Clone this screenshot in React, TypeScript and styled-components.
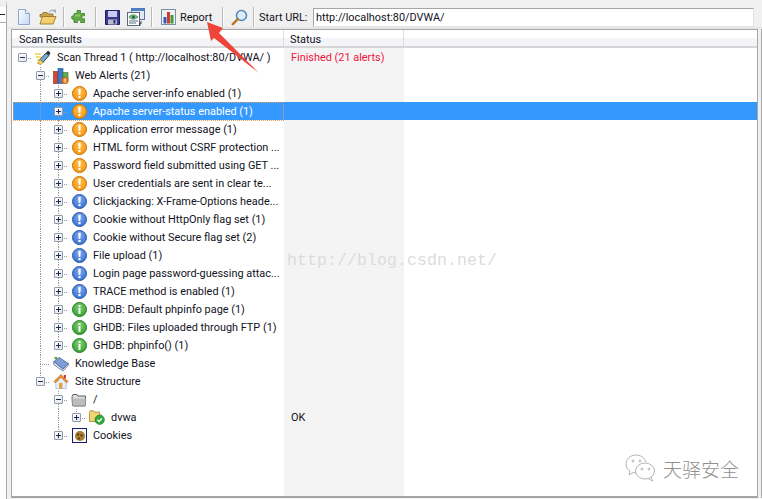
import React from "react";
import styled, { createGlobalStyle, css } from "styled-components";

const Global = createGlobalStyle`
  html, body { margin: 0; padding: 0; background: #f0f0f0; }
  * { box-sizing: border-box; }
`;

const FONT = `Roboto, "Noto Sans", sans-serif`;

const Page = styled.div`
  position: relative;
  width: 762px;
  height: 499px;
  overflow: hidden;
  display: flex;
  background: #f0f0f0;
  font-family: ${FONT};
  font-size: 10.9px;
  color: #11121c;
`;

const LeftStrip = styled.div`
  width: 7px;
  flex: none;
  background: #fff;
  border-right: 1px solid #a9a9a9;
  border-top: 7px solid #f0f0f0;
  display: flex;
  flex-direction: column;
`;

const StripHead = styled.div`
  height: 16px;
  border-bottom: 1px solid #a9a9a9;
  display: flex;
  align-items: flex-start;
  padding-top: 7px;
`;

const StripDash = styled.div`
  width: 5px;
  height: 1px;
  background: #222;
`;

const MainCol = styled.div`
  flex: 1;
  min-width: 0;
  display: flex;
  flex-direction: column;
`;

const Toolbar = styled.div`
  height: 29px;
  flex: none;
  display: flex;
  align-items: center;
  padding: 7px 0 0 5px;
  background: #f0f0f0;
  border-bottom: 2px solid #e6e6e6;
`;

const ToolButton = styled.div`
  width: 24px;
  height: 20px;
  flex: none;
  display: flex;
  align-items: center;
  justify-content: center;
`;

const ReportButton = styled.div`
  width: 60px;
  margin-left: 5px;
  flex: none;
  display: flex;
  align-items: center;
  gap: 3px;
`;

const ToolSep = styled.div<{ $l: number; $r: number }>`
  width: 2px;
  height: 20px;
  flex: none;
  margin: 0 ${(p) => p.$r}px 0 ${(p) => p.$l}px;
  background: linear-gradient(to right, #b9b9b9 1px, #fbfbfb 1px);
`;

const UrlLabel = styled.span`
  margin-left: 4px;
  width: 54px;
  flex: none;
  white-space: nowrap;
`;

const UrlInput = styled.div`
  width: 441px;
  height: 19px;
  flex: none;
  background: #fff;
  border: 1px solid #e4e4e4;
  border-top-color: #a6a6a6;
  border-left-color: #a6a6a6;
  padding-left: 2px;
  line-height: 17px;
  white-space: nowrap;
`;

const Content = styled.div`
  flex: 1;
  min-height: 0;
  display: flex;
  padding: 0 0 1px 4px;
`;

const Panel = styled.div`
  width: 747px;
  flex: none;
  background: #fff;
  border: 1px solid #a6a6a6;
  border-bottom-width: 2px;
  display: flex;
  flex-direction: column;
`;

const RightEdge = styled.div`
  width: 1px;
  margin-left: 3px;
  flex: none;
  background: #a9a9a9;
`;

const Header = styled.div`
  height: 18px;
  flex: none;
  display: grid;
  grid-template-columns: 272px 120px 1fr;
  background: linear-gradient(to bottom, #fff 0, #fff 8px, #f3f4f7 8px, #f3f4f7 16px, #d6d6d6 16px);
`;

const HeaderCell = styled.div<{ $pad: number }>`
  padding-left: ${(p) => p.$pad}px;
  height: 16px;
  line-height: 20px;
  border-right: 1px solid #dedede;
  &:last-child { border-right: 0; }
`;

const Tree = styled.div`
  flex: 1;
  min-height: 0;
  padding-left: 1px;
  background: linear-gradient(
    to right,
    #fff 272px,
    #f4f4f4 272px,
    #f4f4f4 392px,
    #fff 392px
  );
`;

const Row = styled.div<{ $selected?: boolean }>`
  height: 18px;
  display: grid;
  grid-template-columns: 271px 120px 1fr;
  ${(p) =>
    p.$selected &&
    css`
      background: #3399ff;
      color: #fff;
    `}
`;

const NameCell = styled.div<{ $selected?: boolean }>`
  display: flex;
  align-items: center;
  min-width: 0;
  white-space: nowrap;
  ${(p) =>
    p.$selected &&
    css`
      outline: 1px dotted #e8a060;
      outline-offset: -1px;
    `}
`;

const dotsV = "repeating-linear-gradient(to bottom, #9a9a9a 0 1px, transparent 1px 2px)";
const dotsH = "repeating-linear-gradient(to right, #9a9a9a 0 1px, transparent 1px 2px)";

const GuideCell = styled.div<{ $up?: boolean; $down?: boolean; $across?: boolean }>`
  width: 18px;
  height: 18px;
  flex: none;
  display: flex;
  align-items: center;
  justify-content: center;
  background-repeat: no-repeat;
  background-image: ${(p) =>
    [p.$up && dotsV, p.$down && dotsV, p.$across && dotsH].filter(Boolean).join(",") || "none"};
  background-size: ${(p) =>
    [p.$up && "1px 9px", p.$down && "1px 9px", p.$across && "9px 1px"].filter(Boolean).join(",") ||
    "auto"};
  background-position: ${(p) =>
    [p.$up && "9px 0", p.$down && "9px 9px", p.$across && "9px 9px"].filter(Boolean).join(",") ||
    "0 0"};
`;

const ExpanderBox = styled.div`
  width: 9px;
  height: 9px;
  margin-left: 1px;
  border: 1px solid #8e9aa6;
  background: linear-gradient(135deg, #fff, #e2e4ea);
  display: flex;
  align-items: center;
  justify-content: center;
  border-radius: 1px;
`;

const IconSlot = styled.div`
  width: 16px;
  height: 16px;
  flex: none;
  margin: 0 6px 0 4px;
  display: flex;
  align-items: center;
  justify-content: center;
`;

const Name = styled.span`
  line-height: 18px;
  margin-top: 1px;
`;

const StatusCell = styled.div<{ $finished?: boolean }>`
  padding-left: 7px;
  line-height: 20px;
  height: 18px;
  white-space: nowrap;
  color: ${(p) => (p.$finished ? "#f0143c" : "inherit")};
`;

const WatermarkUrl = styled.div`
  position: absolute;
  left: 287px;
  top: 251px;
  font-family: "Liberation Mono", monospace;
  font-size: 16.67px;
  color: #dcdcdc;
  white-space: nowrap;
`;

const WeChatMark = styled.div`
  position: absolute;
  left: 625px;
  top: 453px;
  display: flex;
  align-items: center;
  gap: 6px;
  font-family: "Noto Sans CJK SC", sans-serif;
  font-size: 19px;
  font-weight: 300;
  color: #909090;
  white-space: nowrap;
`;

const ArrowLayer = styled.svg`
  position: absolute;
  left: 0;
  top: 0;
  pointer-events: none;
`;

/* ---------- icons ---------- */

const DocIcon = () => (
  <svg width="16" height="18" viewBox="0 0 16 18">
    <defs>
      <linearGradient id="docg" x1="0" y1="0" x2="1" y2="1">
        <stop offset="0" stopColor="#ffffff" />
        <stop offset="1" stopColor="#c4d6f4" />
      </linearGradient>
    </defs>
    <path d="M2.500 1.500h7l4 4v11h-11z" fill="url(#docg)" stroke="#8ea6cc" />
    <path d="M9.500 1.500v4h4" fill="#eef3fb" stroke="#8ea6cc" />
  </svg>
);

const OpenFolderIcon = () => (
  <svg width="18" height="16" viewBox="0 0 18 16">
    <path d="M1 5.500h2l1-2h4l1 1.500h5v3H1z" fill="#c9a44e" stroke="#86702f" strokeWidth=".8" />
    <path d="M10 3.500c1-2 3-3 5-2l-1 .2 2.500 1.600-.5-2.800-.6.9" fill="none" stroke="#8aa0b8" strokeWidth="1" />
    <path d="M3.500 7.500H17l-3 7.500H1z" fill="#f4cf6b" stroke="#97792e" strokeWidth=".9" />
  </svg>
);

const PuzzleIcon = () => (
  <svg width="16" height="16" viewBox="0 0 16 16">
    <path
      d="M6 1.500h3.500v1.700c0 1 .5 1.300 1.500 1.300h2.500V7c-1.200-.6-2.600-.2-2.600 1.300s1.400 2 2.600 1.300v3.900H9.500c.6-1.200.2-2.400-1.400-2.400s-2 1.200-1.400 2.400H3V10c-1.100.6-2.500.1-2.500-1.400S1.900 6.400 3 7V4.500h3z"
      fill="#62a945"
      stroke="#3e7f2c"
      strokeWidth=".8"
    />
    <path d="M4 5.500h5v2H4z" fill="#8cc96c" />
  </svg>
);

const FloppyIcon = () => (
  <svg width="15" height="15" viewBox="0 0 15 15">
    <path d="M.5.5h14v14H.5z" fill="#39398f" stroke="#1d1d66" />
    <rect x="3" y="1" width="9" height="6" fill="#c8cbee" />
    <rect x="3" y="9.500" width="9" height="5" fill="#b9bbcc" />
    <rect x="8.500" y="10" width="2" height="3.600" fill="#2f2f74" />
  </svg>
);

const ConfigIcon = () => (
  <svg width="18" height="18" viewBox="0 0 18 18">
    <rect x="4.500" y=".5" width="13" height="11" fill="#dfe7f2" stroke="#5476a8" />
    <rect x="4.500" y=".5" width="13" height="2.500" fill="#4f80c8" />
    <rect x=".5" y="4.500" width="12" height="13" fill="#fdfdfd" stroke="#5b6b7d" />
    <path d="M2 9c2-3 6-3 9 0-3 3-7 3-9 0z" fill="#7fbe7a" stroke="#3c7a46" strokeWidth=".6" />
    <circle cx="6.500" cy="9" r="1.500" fill="#1f5e6e" />
    <path d="M2 13h9M2 15h7" stroke="#61708a" />
    <path d="M14 13v3h-1.500M13.500 14.500l-1.500 1.500 1.500 1.500" fill="none" stroke="#334" strokeWidth=".9" />
  </svg>
);

const ReportIcon = () => (
  <svg width="16" height="17" viewBox="0 0 16 17">
    <rect x=".5" y=".5" width="14" height="15" fill="#eef0f5" stroke="#7d8ea6" />
    <rect x="2.500" y="8" width="3" height="6.500" fill="#2e5fb8" />
    <rect x="6" y="3" width="3" height="11.500" fill="#d43b2c" />
    <rect x="9.500" y="6" width="3" height="8.500" fill="#3d9a3a" />
  </svg>
);

const LensIcon = () => (
  <svg width="17" height="17" viewBox="0 0 17 17">
    <circle cx="10.500" cy="6.500" r="5" fill="#d9ecfb" stroke="#4f86b8" strokeWidth="1.500" />
    <path d="M7.500 4.500a3.500 3 0 0 1 3-1.500" stroke="#fff" fill="none" />
    <path d="M6.800 10.200 1.800 15.200" stroke="#b67a2c" strokeWidth="2.600" strokeLinecap="round" />
  </svg>
);

const BrushIcon = () => (
  <svg width="16" height="16" viewBox="0 0 16 16">
    <path d="M0 4h6M1 7h5M2 10h4M3 13h3" stroke="#f1d04a" strokeWidth="1.300" />
    <path d="M5 9.500 11 3l3 2.500-6 7z" fill="#7da9c9" stroke="#1e3a52" strokeWidth=".9" />
    <path d="M11 3l2-2.500 2.500 2.500-1.500 2.500z" fill="#26323e" />
    <path d="M5 9.500l3 3-2 2-3.500-1z" fill="#f3d65c" stroke="#8a7420" strokeWidth=".6" />
  </svg>
);

const WebAlertsIcon = () => (
  <svg width="16" height="16" viewBox="0 0 16 16">
    <rect x=".5" y="3.500" width="4.500" height="12" fill="#d24a32" stroke="#8a2a1a" strokeWidth=".6" />
    <rect x="5" y=".5" width="5" height="15" fill="#3c7ad0" stroke="#24508e" strokeWidth=".6" />
    <rect x="10" y="4.500" width="5" height="8" fill="#62ae4a" stroke="#3c7a2c" strokeWidth=".6" />
    <circle cx="12" cy="12.500" r="3.300" fill="#ee7f1a" stroke="#a85208" strokeWidth=".6" />
    <rect x="11.500" y="10.500" width="1.200" height="2.400" fill="#fff" />
    <rect x="11.500" y="13.400" width="1.200" height="1.100" fill="#fff" />
  </svg>
);

const tones = {
  warn: { hi: "#ffc04d", fill: "#f59208", edge: "#c96f08" },
  info: { hi: "#7fa8ec", fill: "#2f6bd0", edge: "#2a5aa8" },
  ok: { hi: "#7fd070", fill: "#2f9c2a", edge: "#2d7f28" },
};

const DotIcon = ({ tone }: { tone: keyof typeof tones }) => (
  <svg width="15" height="15" viewBox="0 0 15 15">
    <defs>
      <radialGradient id={`dot-${tone}`} cx=".5" cy=".35" r=".7">
        <stop offset="0" stopColor={tones[tone].hi} />
        <stop offset="1" stopColor={tones[tone].fill} />
      </radialGradient>
    </defs>
    <circle cx="7.500" cy="7.500" r="7" fill={`url(#dot-${tone})`} stroke={tones[tone].edge} />
    {tone === "ok" ? (
      <>
        <rect x="6.500" y="3" width="2" height="2" fill="#fff" />
        <rect x="6.500" y="6" width="2" height="6" fill="#fff" />
      </>
    ) : (
      <>
        <path d="M6.200 2.800h2.600l-.5 6.200H6.700z" fill="#fff" />
        <rect x="6.400" y="10" width="2.200" height="2.200" fill="#fff" />
      </>
    )}
  </svg>
);

const BookIcon = () => (
  <svg width="17" height="16" viewBox="0 0 17 16">
    <path d="M.8 5.500 6.500 1l9.700 6.500-5.700 6z" fill="#7f9bd8" stroke="#46598c" strokeWidth=".8" />
    <path d="M.8 5.500v3l9.700 7 5.700-6V7.500l-5.700 6z" fill="#eef1f8" stroke="#46598c" strokeWidth=".8" />
    <path d="M1 .8 4 .2l.8 2.300L3 3.800z" fill="#52a83e" />
  </svg>
);

const HouseIcon = () => (
  <svg width="17" height="17" viewBox="0 0 17 17">
    <path d="M3 9.500 8.500 4l5.500 5.500V16H3z" fill="#e6f0fa" stroke="#8aa4bc" strokeWidth=".6" />
    <rect x="6.500" y="10" width="3.500" height="6" fill="#e89a3c" />
    <path d="M8.500 1 1 8.500 2.500 10l6-6 6 6L16 8.500z" fill="#f0922e" stroke="#b05a14" strokeWidth=".6" />
    <rect x="11.500" y="1.500" width="2.200" height="3.500" fill="#c0392b" />
  </svg>
);

const PlainFolderIcon = () => (
  <svg width="16" height="14" viewBox="0 0 16 14">
    <path d="M1 3.500 2 1.500h4l1 1.500h7.500v9a1 1 0 0 1-1 1h-11a1 1 0 0 1-1-1z" fill="#dcdcdc" stroke="#5f5f5f" />
    <path d="M1.500 5.500h13v6.700h-13z" fill="#bdbdbd" />
  </svg>
);

const OkFolderIcon = () => (
  <svg width="18" height="17" viewBox="0 0 18 17">
    <path d="M.5 3 1.500 1h3.500l1 1.500H12V13H.5z" fill="#f2d572" stroke="#a58a2e" />
    <circle cx="12" cy="11" r="5.300" fill="#35a83c" stroke="#1f7526" strokeWidth=".7" />
    <path d="M9.500 11l2 2 3-3.500" stroke="#fff" strokeWidth="1.500" fill="none" />
  </svg>
);

const CookieIcon = () => (
  <svg width="15" height="15" viewBox="0 0 15 15">
    <rect x=".5" y=".5" width="14" height="14" fill="#f8f8fb" stroke="#15206a" />
    <circle cx="8" cy="8" r="5" fill="#a97c34" />
    <circle cx="6" cy="6.500" r="1.100" fill="#4a2f10" />
    <circle cx="9.500" cy="7.500" r="1" fill="#4a2f10" />
    <circle cx="7" cy="10.500" r="1" fill="#4a2f10" />
  </svg>
);

const WeChatIcon = () => (
  <svg width="32" height="30" viewBox="0 0 32 30" fill="none" stroke="#b4b4b4" strokeWidth="1">
    <path d="M21 9C19 4 15 2 11 2 5.500 2 1 6 1 11c0 3 1.500 5.500 4 7l-1 4 4-2.500c1 .3 2 .4 3 .4" />
    <ellipse cx="20" cy="18" rx="9.500" ry="8" />
    <path d="M26 24l1.500 4-4.500-2.500" />
    <circle cx="8" cy="8" r="1" />
    <circle cx="15" cy="8" r="1" />
    <circle cx="17" cy="16" r="1" />
    <circle cx="24" cy="16" r="1" />
  </svg>
);

/* ---------- data ---------- */

type Tok = "." | "|" | "L" | "T" | "+T" | "+L" | "-T" | "-L" | "-O";

const Guide = ({ tok }: { tok: Tok }) => {
  const core = tok.slice(-1);
  const hasBox = tok.length > 1;
  return (
    <GuideCell
      $up={core === "T" || core === "L" || core === "|"}
      $down={core === "T" || core === "|"}
      $across={core === "T" || core === "L" || core === "O"}
    >
      {hasBox && (
        <ExpanderBox>
          <svg width="5" height="5" viewBox="0 0 5 5">
            <path d={tok[0] === "+" ? "M0 2.500h5M2.500 0v5" : "M0 2.500h5"} stroke="#1c2a52" />
          </svg>
        </ExpanderBox>
      )}
    </GuideCell>
  );
};

type RowData = {
  guides: Tok[];
  icon: React.ReactNode;
  text: string;
  status?: string;
  finished?: boolean;
  selected?: boolean;
};

const w = <DotIcon tone="warn" />;
const i = <DotIcon tone="info" />;
const g = <DotIcon tone="ok" />;
const leaf = (icon: React.ReactNode, text: string, last = false, selected = false): RowData => ({
  guides: [".", "|", last ? "+L" : "+T"],
  icon,
  text,
  selected,
});

const rows: RowData[] = [
  { guides: ["-O"], icon: <BrushIcon />, text: "Scan Thread 1 ( http://localhost:80/DVWA/ )", status: "Finished (21 alerts)", finished: true },
  { guides: [".", "-T"], icon: <WebAlertsIcon />, text: "Web Alerts (21)" },
  leaf(w, "Apache server-info enabled (1)"),
  leaf(w, "Apache server-status enabled (1)", false, true),
  leaf(w, "Application error message (1)"),
  leaf(w, "HTML form without CSRF protection ..."),
  leaf(w, "Password field submitted using GET ..."),
  leaf(w, "User credentials are sent in clear te..."),
  leaf(i, "Clickjacking: X-Frame-Options heade..."),
  leaf(i, "Cookie without HttpOnly flag set (1)"),
  leaf(i, "Cookie without Secure flag set (2)"),
  leaf(i, "File upload (1)"),
  leaf(i, "Login page password-guessing attac..."),
  leaf(i, "TRACE method is enabled (1)"),
  leaf(g, "GHDB: Default phpinfo page (1)"),
  leaf(g, "GHDB: Files uploaded through FTP (1)"),
  leaf(g, "GHDB: phpinfo() (1)", true),
  { guides: [".", "T"], icon: <BookIcon />, text: "Knowledge Base" },
  { guides: [".", "-L"], icon: <HouseIcon />, text: "Site Structure" },
  { guides: [".", ".", "-T"], icon: <PlainFolderIcon />, text: "/" },
  { guides: [".", ".", "|", "+L"], icon: <OkFolderIcon />, text: "dvwa", status: "OK" },
  { guides: [".", ".", "+L"], icon: <CookieIcon />, text: "Cookies" },
];

export default function App() {
  return (
    <Page>
      <Global />
      <LeftStrip>
        <StripHead>
          <StripDash />
        </StripHead>
      </LeftStrip>
      <MainCol>
        <Toolbar>
          <ToolButton><DocIcon /></ToolButton>
          <ToolButton><OpenFolderIcon /></ToolButton>
          <ToolSep $l={3} $r={2} />
          <ToolButton><PuzzleIcon /></ToolButton>
          <ToolSep $l={4} $r={3} />
          <ToolButton><FloppyIcon /></ToolButton>
          <ToolButton><ConfigIcon /></ToolButton>
          <ToolSep $l={3} $r={3} />
          <ReportButton>
            <ReportIcon />
            <span>Report</span>
          </ReportButton>
          <ToolSep $l={1} $r={3} />
          <ToolButton><LensIcon /></ToolButton>
          <ToolSep $l={2} $r={0} />
          <UrlLabel>Start URL:</UrlLabel>
          <UrlInput>http://localhost:80/DVWA/</UrlInput>
        </Toolbar>
        <Content>
          <Panel>
            <Header>
              <HeaderCell $pad={7}>Scan Results</HeaderCell>
              <HeaderCell $pad={6}>Status</HeaderCell>
              <HeaderCell $pad={0} />
            </Header>
            <Tree>
              {rows.map((r) => (
                <Row key={r.text} $selected={r.selected}>
                  <NameCell $selected={r.selected}>
                    {r.guides.map((t, n) => (
                      <Guide key={n} tok={t} />
                    ))}
                    <IconSlot>{r.icon}</IconSlot>
                    <Name>{r.text}</Name>
                  </NameCell>
                  <StatusCell $finished={r.finished}>{r.status}</StatusCell>
                </Row>
              ))}
            </Tree>
          </Panel>
          <RightEdge />
        </Content>
      </MainCol>
      <WatermarkUrl>http://blog.csdn.net/</WatermarkUrl>
      <WeChatMark>
        <WeChatIcon />
        <span>天驿安全</span>
      </WeChatMark>
      <ArrowLayer width="762" height="499" viewBox="0 0 762 499">
        <polygon points="207,22 223,28 219,33 259,73 214,38 211,41" fill="#f0433a" />
      </ArrowLayer>
    </Page>
  );
}
